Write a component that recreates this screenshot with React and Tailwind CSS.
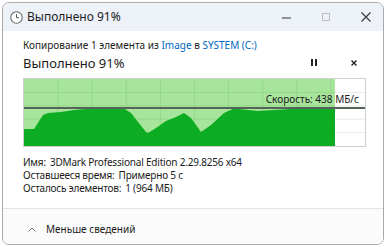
import React from "react";

const font = { fontFamily: '"Noto Sans", "Open Sans", sans-serif' };

function Chart() {
  const W = 341;
  const H = 67;
  const pts = [
    [0, 50], [10, 50], [19, 36], [24, 34], [37, 33], [50, 31], [67, 29.5], [84, 29], [99, 29],
    [107, 34], [114, 43], [122, 53], [124, 54], [132, 49], [142, 42], [152, 38], [160, 34],
    [167, 39], [177, 53], [187, 46], [200, 34], [210, 29.5], [234, 32], [250, 31], [267, 30], [311, 29],
  ];
  const d = "M0," + H + " L" + pts.map((p) => p.join(",")).join(" L") + " L311," + H + " Z";
  const vx = [34.1, 68.2, 102.3, 136.4, 170.5, 204.6, 238.7, 272.8, 306.9];
  const hy = [13.4, 26.8, 40.2, 53.6];
  return (
    <svg width={W} height={H} viewBox={`0 0 ${W} ${H}`} className="block">
      <rect x="0" y="0" width={W} height={H} fill="#ffffff" />
      <rect x="0" y="0" width="311" height={H} fill="#a7e59c" />
      {vx.map((x) => (
        <line key={"v" + x} x1={x} y1="0" x2={x} y2={H} stroke={x < 311 ? "#94d888" : "#e3efe3"} strokeWidth="1" />
      ))}
      {hy.map((y) => (
        <g key={"h" + y}>
          <line x1="0" y1={y} x2="311" y2={y} stroke="#94d888" strokeWidth="1" />
          <line x1="311" y1={y} x2={W} y2={y} stroke="#e3efe3" strokeWidth="1" />
        </g>
      ))}
      <path d={d} fill="#0cad22" />
      <line x1="0" y1="29" x2={W} y2="29" stroke="#56625a" strokeWidth="2" />
    </svg>
  );
}

export default function App() {
  return (
    <div className="w-[387px] h-[247px] bg-white p-[2px] text-[#1b1b1b]" style={font}>
      <div className="w-[382px] h-[243px] border border-[#a9a9a9] rounded-[7px] overflow-hidden flex flex-col bg-white">
        {/* Title bar */}
        <div className="h-[28px] bg-[#edf2f9] flex items-center pl-[7px] pr-[12px] shrink-0">
          <svg width="13" height="13" viewBox="0 0 13 13" className="shrink-0">
            <circle cx="6.5" cy="6.5" r="5.7" fill="#ffffff" stroke="#6b6b6b" strokeWidth="1.1" />
            <path d="M6.5 3.2 V6.7 H9" fill="none" stroke="#555" strokeWidth="1" />
          </svg>
          <span className="ml-[4px] text-[12px] leading-none">Выполнено 91%</span>
          <div className="ml-auto flex items-center">
            <svg width="9" height="9" viewBox="0 0 9 9">
              <line x1="0" y1="5" x2="9" y2="5" stroke="#333" strokeWidth="1" />
            </svg>
            <svg width="8" height="8" viewBox="0 0 8 8" className="ml-[31px]">
              <rect x="0.5" y="0.5" width="7" height="7" fill="none" stroke="#bdbdbd" strokeWidth="1" />
            </svg>
            <svg width="10" height="10" viewBox="0 0 10 10" className="ml-[31px]">
              <path d="M0.5 0.5 L9.5 9.5 M9.5 0.5 L0.5 9.5" stroke="#333" strokeWidth="1.1" />
            </svg>
          </div>
        </div>

        {/* Body */}
        <div className="flex flex-col pl-[20px] pr-[19px] pt-[7px]">
          <div className="text-[10px] leading-[14px] whitespace-nowrap">
            Копирование 1 элемента из <span className="text-[#0067c0]">Image</span> в{" "}
            <span className="text-[#0067c0]">SYSTEM (C:)</span>
          </div>
          <div className="flex items-center h-[21px]">
            <span className="text-[13px] leading-[20px]">Выполнено 91%</span>
            <div className="ml-auto flex items-center pr-[7px]">
              <svg width="6" height="7" viewBox="0 0 6 7">
                <rect x="0" y="0" width="2" height="7" fill="#222" />
                <rect x="4" y="0" width="2" height="7" fill="#222" />
              </svg>
              <svg width="6" height="6" viewBox="0 0 6 6" className="ml-[34px]">
                <path d="M0.5 0.5 L5.5 5.5 M5.5 0.5 L0.5 5.5" stroke="#222" strokeWidth="1.4" />
              </svg>
            </div>
          </div>
          <div className="relative mt-[5px] border border-[#cfcfcf] w-[343px] h-[69px]">
            <Chart />
            <span className="absolute right-[6px] top-[13px] text-[10px] leading-[14px] text-[#1b1b1b]">
              Скорость: 438 МБ/с
            </span>
          </div>
          <div className="mt-[9px] text-[10px] leading-[13px] tracking-[-0.2px] flex flex-col">
            <div className="whitespace-nowrap">
              Имя:<span className="ml-[4px]">3DMark Professional Edition 2.29.8256 x64</span>
            </div>
            <div className="whitespace-nowrap">
              Оставшееся время:<span className="ml-[4px]">Примерно 5 с</span>
            </div>
            <div className="whitespace-nowrap">
              Осталось элементов:<span className="ml-[4px]">1 (964 МБ)</span>
            </div>
          </div>
        </div>

        {/* Footer */}
        <div className="mt-auto h-[36px] border-t border-[#e4e4e4] bg-[#fbfbfb] flex items-center pl-[25px] pt-[5px]">
          <svg width="8" height="5" viewBox="0 0 8 5">
            <path d="M0.5 4.5 L4 1 L7.5 4.5" fill="none" stroke="#777" strokeWidth="1" />
          </svg>
          <span className="ml-[10px] text-[10px] leading-none">Меньше сведений</span>
        </div>
      </div>
    </div>
  );
}
